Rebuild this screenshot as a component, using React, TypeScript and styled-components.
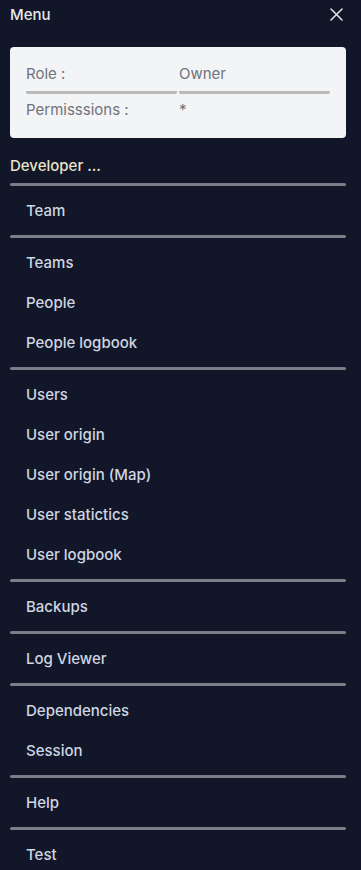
import styled, { createGlobalStyle } from 'styled-components';

const GlobalStyle = createGlobalStyle`
  html, body {
    margin: 0;
    padding: 0;
    background: #111729;
  }
  body {
    font-family: Inter, "Noto Sans", sans-serif;
  }
`;

const Panel = styled.nav`
  width: 361px;
  min-height: 870px;
  box-sizing: border-box;
  padding: 0 15px 0 10px;
  background: #111729;
`;

const Header = styled.div`
  height: 29px;
  display: flex;
  align-items: center;
  justify-content: space-between;
`;

const Title = styled.span`
  font-size: 15px;
  font-weight: 500;
  color: #e5e7eb;
`;

const CloseButton = styled.button`
  border: 0;
  background: none;
  padding: 0;
  width: 14px;
  height: 14px;
  margin-right: 3px;
  display: flex;
  align-items: center;
  justify-content: center;
  color: #e5e7eb;
`;

const InfoCard = styled.div`
  margin-top: 18px;
  background: #f3f4f6;
  border-radius: 4px;
  padding: 17px 16px 18px;
  display: grid;
  grid-template-columns: 1fr 1fr;
  column-gap: 2px;
`;

const InfoCell = styled.div<{ $divided?: boolean }>`
  font-size: 15px;
  line-height: 20px;
  color: #6f737b;
  padding-bottom: ${p => (p.$divided ? '7px' : '0')};
  margin-bottom: ${p => (p.$divided ? '6px' : '0')};
  border-bottom: ${p => (p.$divided ? '3px solid #b9b9b9' : 'none')};
  border-radius: ${p => (p.$divided ? '0 0 2px 2px' : '0')};
`;

const SectionLabel = styled.div`
  margin-top: 18px;
  font-size: 15px;
  font-weight: 500;
  line-height: 20px;
  color: #ebe1c8;
`;

const Divider = styled.div`
  height: 3px;
  border-radius: 2px;
  background: #7c7f88;
  margin: 5px 0 4px;
`;

const FirstDivider = styled(Divider)`
  margin-top: 7px;
`;

const Item = styled.a`
  display: flex;
  align-items: center;
  height: 40px;
  padding-left: 16px;
  font-size: 15px;
  font-weight: 500;
  color: #cfd5e1;
  text-decoration: none;
`;

const groups: string[][] = [
  ['Team'],
  ['Teams', 'People', 'People logbook'],
  ['Users', 'User origin', 'User origin (Map)', 'User statictics', 'User logbook'],
  ['Backups'],
  ['Log Viewer'],
  ['Dependencies', 'Session'],
  ['Help'],
  ['Test'],
];

const CloseIcon = () => (
  <svg width="13" height="13" viewBox="0 0 13 13" fill="none" stroke="currentColor" strokeWidth="1.5" strokeLinecap="round">
    <path d="M1 1L12 12M12 1L1 12" />
  </svg>
);

export default function App() {
  return (
    <>
      <GlobalStyle />
      <Panel>
        <Header>
          <Title>Menu</Title>
          <CloseButton aria-label="Close">
            <CloseIcon />
          </CloseButton>
        </Header>
        <InfoCard>
          <InfoCell $divided>Role :</InfoCell>
          <InfoCell $divided>Owner</InfoCell>
          <InfoCell>Permisssions :</InfoCell>
          <InfoCell>*</InfoCell>
        </InfoCard>
        <SectionLabel>Developer ...</SectionLabel>
        {groups.map((group, i) => (
          <div key={group[0]}>
            {i === 0 ? <FirstDivider /> : <Divider />}
            {group.map(label => (
              <Item key={label}>{label}</Item>
            ))}
          </div>
        ))}
      </Panel>
    </>
  );
}
